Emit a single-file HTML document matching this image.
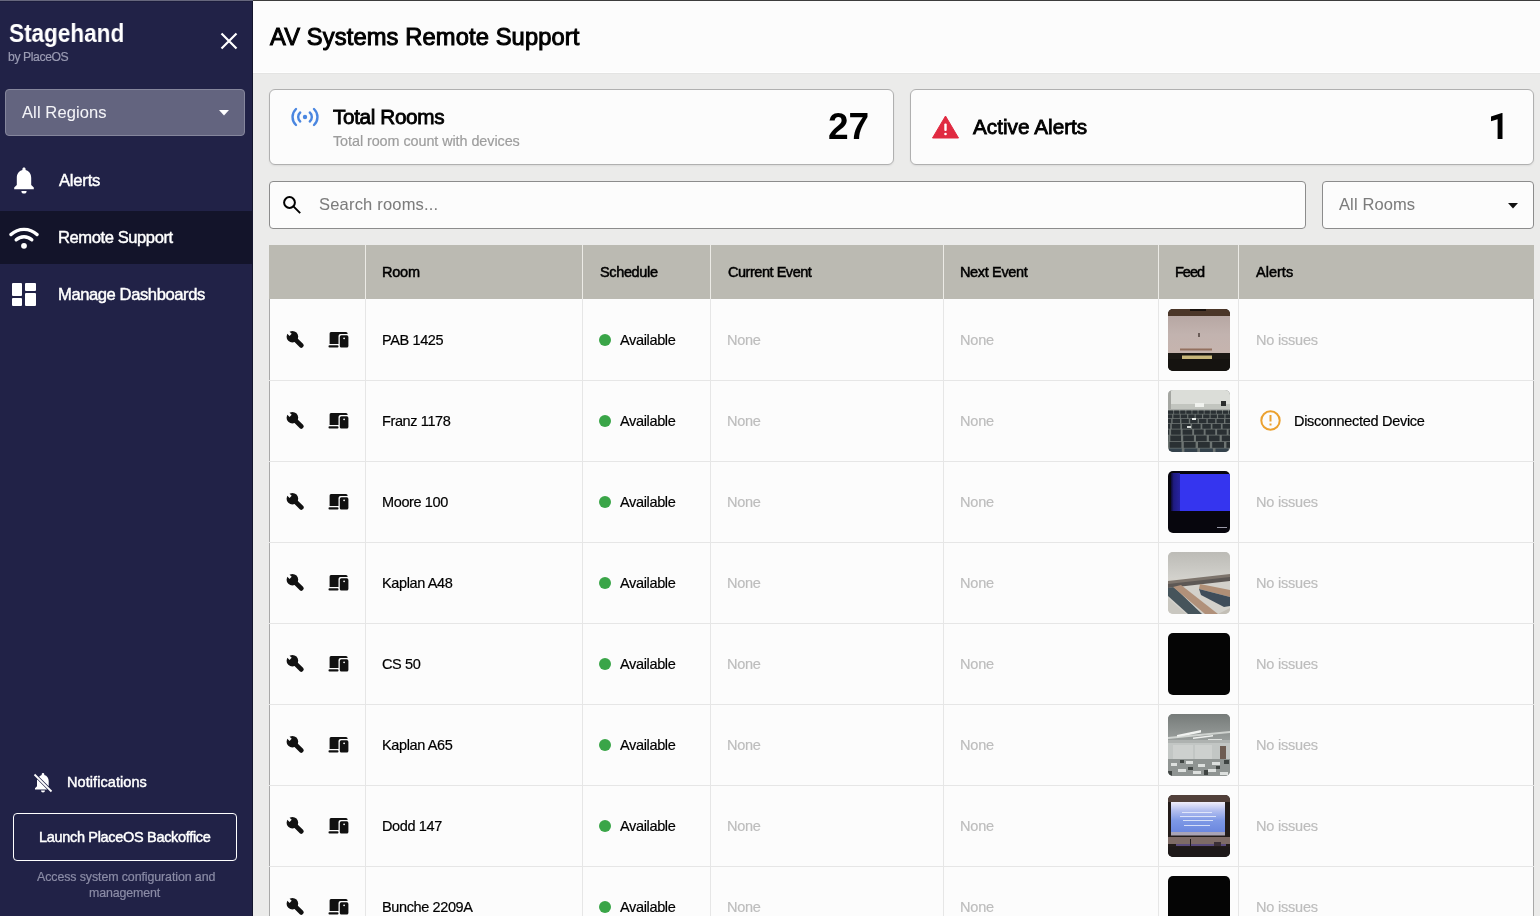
<!DOCTYPE html>
<html><head><meta charset="utf-8"><title>AV Systems Remote Support</title>
<style>
html,body{margin:0;padding:0;width:1540px;height:916px;overflow:hidden;position:relative}
body{font-family:"Liberation Sans",sans-serif}
.t{position:absolute;white-space:nowrap;will-change:transform}
.b{position:absolute}

</style></head><body>
<div class="b" style="left:0px;top:0px;width:1540px;height:916px;background:#ebebea"></div>
<div class="b" style="left:253px;top:0px;width:1287px;height:73px;background:#fcfcfc"></div>
<div class="b" style="left:253px;top:72px;width:1287px;height:1px;background:#ffffff"></div>
<div class="b" style="left:253px;top:73px;width:1287px;height:1px;background:#e4e4e3"></div>
<div class="b" style="left:0px;top:0px;width:253px;height:916px;background:#212247"></div>
<div class="b" style="left:252px;top:0px;width:1px;height:916px;background:#15162e"></div>
<div class="b" style="left:0px;top:0px;width:253px;height:1px;background:#66677d"></div>
<div class="b" style="left:253px;top:0px;width:1287px;height:1px;background:#3d3d3d"></div>
<div class="b" style="left:0px;top:1px;width:252px;height:1px;background:#1c1d3c"></div>
<div class="t" style="left:9.0px;top:17.50px;font-size:26.1px;line-height:31.32px;color:#fff;font-weight:bold;letter-spacing:0px;transform:scaleX(0.864);transform-origin:0 50%;">Stagehand</div>
<div class="t" style="left:8.3px;top:50.25px;font-size:12.2px;line-height:14.64px;color:#9a9bb3;font-weight:normal;letter-spacing:-0.4px;-webkit-text-stroke:0.2px #9a9bb3;">by PlaceOS</div>
<svg class="b" style="left:219px;top:31px" width="20" height="20" viewBox="0 0 20 20"><path d="M2.5 2.5 L17.5 17.5 M17.5 2.5 L2.5 17.5" stroke="#fff" stroke-width="2.2" stroke-linecap="butt"/></svg>
<div class="b" style="left:5px;top:89px;width:240px;height:47px;background:#63647f;border:1px solid #85869c;border-radius:4px;box-sizing:border-box"></div>
<div class="t" style="left:21.5px;top:103.08px;font-size:16.5px;line-height:19.8px;color:#f4f4f8;font-weight:normal;letter-spacing:0.11px;-webkit-text-stroke:0.05px #f4f4f8;">All Regions</div>
<svg class="b" style="left:219px;top:110px" width="10" height="6" viewBox="0 0 10 6"><path d="M0 0 H10 L5 5.5 Z" fill="#fff"/></svg>
<div class="b" style="left:0px;top:211px;width:252px;height:53px;background:#13142a"></div>
<svg class="b" style="left:12px;top:166px" width="24" height="28" viewBox="0 0 24 28"><path d="M12 1.5 c1 0 1.6 .7 1.6 1.6 v.9 c3.6 1 5.6 4 5.6 7.8 v7.2 l2.6 2.6 v1.6 H2.2 v-1.6 l2.6-2.6 v-7.2 c0-3.8 2-6.8 5.6-7.8 v-.9 c0-.9 .6-1.6 1.6-1.6z M9.4 25 h5.2 a2.6 2.6 0 0 1 -5.2 0z" fill="#fff"/></svg>
<div class="t" style="left:59.1px;top:170.69px;font-size:16.6px;line-height:19.92px;color:#fff;font-weight:normal;letter-spacing:-0.22px;-webkit-text-stroke:0.45px #fff;">Alerts</div>
<svg class="b" style="left:9px;top:226px" width="30" height="24" viewBox="0 0 30 24"><path d="M2 8.5 A19 19 0 0 1 28 8.5" stroke="#fff" stroke-width="3.4" fill="none" stroke-linecap="round"/><path d="M7.2 13.8 A11.5 11.5 0 0 1 22.8 13.8" stroke="#fff" stroke-width="3.4" fill="none" stroke-linecap="round"/><circle cx="15" cy="19.8" r="2.9" fill="#fff"/></svg>
<div class="t" style="left:58.1px;top:227.69px;font-size:16.6px;line-height:19.92px;color:#fff;font-weight:normal;letter-spacing:-0.438px;-webkit-text-stroke:0.45px #fff;">Remote Support</div>
<svg class="b" style="left:12px;top:283px" width="24" height="24" viewBox="0 0 24 24"><rect x="0" y="0" width="10" height="13" rx="1" fill="#fff"/><rect x="13" y="0" width="11" height="8" rx="1" fill="#fff"/><rect x="0" y="15" width="10" height="8" rx="1" fill="#fff"/><rect x="13" y="10" width="11" height="13" rx="1" fill="#fff"/></svg>
<div class="t" style="left:58.1px;top:285.39px;font-size:16.6px;line-height:19.92px;color:#fff;font-weight:normal;letter-spacing:-0.424px;-webkit-text-stroke:0.45px #fff;">Manage Dashboards</div>
<svg class="b" style="left:33px;top:772px" width="20" height="21" viewBox="0 0 20 21"><path d="M10 1 c.8 0 1.3 .6 1.3 1.3 v.6 c2.8 .7 4.4 3.1 4.4 6 v5.4 l-9.6-9.6 c.7-.9 1.7-1.5 2.6-1.8 v-.6 c0-.7 .5-1.3 1.3-1.3z M4.3 7.5 l9.9 9.9 H2 v-1.2 l2-2 v-5.4 c0-.5 .1-.9 .3-1.3z M8 18.5 h4 a2 2 0 0 1 -4 0z" fill="#fff"/><path d="M1.5 2.5 L18.5 19.5" stroke="#fff" stroke-width="1.8"/></svg>
<div class="t" style="left:67.1px;top:774.38px;font-size:14.5px;line-height:17.4px;color:#fff;font-weight:normal;letter-spacing:0.067px;-webkit-text-stroke:0.45px #fff;">Notifications</div>
<div class="b" style="left:13px;top:813px;width:224px;height:48px;border:1.5px solid #fff;border-radius:4px;box-sizing:border-box"></div>
<div class="t" style="left:39.1px;top:829.28px;font-size:14.5px;line-height:17.4px;color:#fff;font-weight:normal;letter-spacing:-0.321px;-webkit-text-stroke:0.45px #fff;">Launch PlaceOS Backoffice</div>
<div class="t" style="left:36.5px;top:870.06px;font-size:12.4px;line-height:14.88px;color:#8b8ca6;font-weight:normal;letter-spacing:-0.093px;-webkit-text-stroke:0.2px #8b8ca6;">Access system configuration and</div>
<div class="t" style="left:89.3px;top:886.06px;font-size:12.4px;line-height:14.88px;color:#8b8ca6;font-weight:normal;letter-spacing:-0.123px;-webkit-text-stroke:0.2px #8b8ca6;">management</div>
<div class="t" style="left:269.9px;top:23.07px;font-size:23.7px;line-height:28.44px;color:#000;font-weight:normal;letter-spacing:0.129px;-webkit-text-stroke:1.0px #000;">AV Systems Remote Support</div>
<div class="b" style="left:269px;top:89px;width:625px;height:76px;background:#fcfcfc;border:1px solid #b0b0b0;border-radius:6px;box-sizing:border-box;box-shadow:0 1px 2px rgba(0,0,0,.07)"></div>
<div class="b" style="left:910px;top:89px;width:624px;height:76px;background:#fcfcfc;border:1px solid #b0b0b0;border-radius:6px;box-sizing:border-box;box-shadow:0 1px 2px rgba(0,0,0,.07)"></div>
<svg class="b" style="left:290px;top:106px" width="30" height="22" viewBox="0 0 30 22"><path d="M6 3 A11 11 0 0 0 6 19" stroke="#4a86e0" stroke-width="2.4" fill="none" stroke-linecap="round"/><path d="M10.2 6.5 A6 6 0 0 0 10.2 15.5" stroke="#4a86e0" stroke-width="2.4" fill="none" stroke-linecap="round"/><path d="M24 3 A11 11 0 0 1 24 19" stroke="#4a86e0" stroke-width="2.4" fill="none" stroke-linecap="round"/><path d="M19.8 6.5 A6 6 0 0 1 19.8 15.5" stroke="#4a86e0" stroke-width="2.4" fill="none" stroke-linecap="round"/><circle cx="15" cy="11" r="2.2" fill="#4a86e0"/></svg>
<div class="t" style="left:332.9px;top:105.41px;font-size:20.7px;line-height:24.84px;color:#000;font-weight:normal;letter-spacing:-0.35px;-webkit-text-stroke:0.85px #000;">Total Rooms</div>
<div class="t" style="left:332.5px;top:133.17px;font-size:14.4px;line-height:17.28px;color:#9d9d9d;font-weight:normal;letter-spacing:-0.071px;-webkit-text-stroke:0.2px #9d9d9d;">Total room count with devices</div>
<div class="t" style="left:827.7px;top:103.88px;font-size:37.1px;line-height:44.52px;color:#000;font-weight:bold;letter-spacing:0.0px;">27</div>
<svg class="b" style="left:932px;top:115px" width="27" height="24" viewBox="0 0 27 24"><path d="M13.5 1 L26.5 23 H0.5 Z" fill="#e02a41" stroke="#e02a41" stroke-width="1" stroke-linejoin="round"/><rect x="12.3" y="8.5" width="2.4" height="7.5" rx="1" fill="#fff"/><circle cx="13.5" cy="19" r="1.3" fill="#fff"/></svg>
<div class="t" style="left:972.7px;top:115.11px;font-size:20.7px;line-height:24.84px;color:#000;font-weight:normal;letter-spacing:0.033px;-webkit-text-stroke:0.85px #000;">Active Alerts</div>
<svg class="b" style="left:1488px;top:110px" width="18" height="32" viewBox="0 0 18 32"><polygon points="14.5,3 14.5,29 9.6,29 9.6,9.2 3,11.2 3,6.4 13.8,3" fill="#000"/></svg>
<div class="b" style="left:269px;top:181px;width:1037px;height:48px;background:#fcfcfc;border:1px solid #8c8c8c;border-radius:4px;box-sizing:border-box"></div>
<svg class="b" style="left:282px;top:195px" width="20" height="20" viewBox="0 0 20 20"><circle cx="7.5" cy="7.5" r="5.4" stroke="#000" stroke-width="2" fill="none"/><path d="M11.2 11.2 L18.2 18.2" stroke="#000" stroke-width="1.9"/></svg>
<div class="t" style="left:318.5px;top:195.38px;font-size:16.5px;line-height:19.8px;color:#7c7c7c;font-weight:normal;letter-spacing:0.193px;-webkit-text-stroke:0.05px #7c7c7c;">Search rooms...</div>
<div class="b" style="left:1322px;top:181px;width:212px;height:48px;background:#fcfcfc;border:1px solid #8c8c8c;border-radius:4px;box-sizing:border-box"></div>
<div class="t" style="left:1338.9px;top:195.28px;font-size:16.5px;line-height:19.8px;color:#7c7c7c;font-weight:normal;letter-spacing:0.114px;-webkit-text-stroke:0.05px #7c7c7c;">All Rooms</div>
<svg class="b" style="left:1508px;top:203px" width="10" height="6" viewBox="0 0 10 6"><path d="M0 0 H10 L5 5.5 Z" fill="#111"/></svg>
<div class="b" style="left:269px;top:245px;width:1265px;height:671px;background:#fcfcfc;border-left:1px solid #a8a8a8;border-right:1px solid #a8a8a8;box-sizing:border-box"></div>
<div class="b" style="left:269px;top:245px;width:1265px;height:54px;background:#bbbab2"></div>
<div class="b" style="left:365px;top:245px;width:1px;height:54px;background:#ecebe6"></div>
<div class="b" style="left:365px;top:299px;width:1px;height:617px;background:#e6e6e6"></div>
<div class="b" style="left:582px;top:245px;width:1px;height:54px;background:#ecebe6"></div>
<div class="b" style="left:582px;top:299px;width:1px;height:617px;background:#e6e6e6"></div>
<div class="b" style="left:710px;top:245px;width:1px;height:54px;background:#ecebe6"></div>
<div class="b" style="left:710px;top:299px;width:1px;height:617px;background:#e6e6e6"></div>
<div class="b" style="left:943px;top:245px;width:1px;height:54px;background:#ecebe6"></div>
<div class="b" style="left:943px;top:299px;width:1px;height:617px;background:#e6e6e6"></div>
<div class="b" style="left:1158px;top:245px;width:1px;height:54px;background:#ecebe6"></div>
<div class="b" style="left:1158px;top:299px;width:1px;height:617px;background:#e6e6e6"></div>
<div class="b" style="left:1238px;top:245px;width:1px;height:54px;background:#ecebe6"></div>
<div class="b" style="left:1238px;top:299px;width:1px;height:617px;background:#e6e6e6"></div>
<div class="t" style="left:381.7px;top:264.28px;font-size:14.5px;line-height:17.4px;color:#000;font-weight:normal;letter-spacing:-0.233px;-webkit-text-stroke:0.5px #000;">Room</div>
<div class="t" style="left:599.9px;top:264.28px;font-size:14.5px;line-height:17.4px;color:#000;font-weight:normal;letter-spacing:-0.357px;-webkit-text-stroke:0.5px #000;">Schedule</div>
<div class="t" style="left:727.9px;top:264.28px;font-size:14.5px;line-height:17.4px;color:#000;font-weight:normal;letter-spacing:-0.467px;-webkit-text-stroke:0.5px #000;">Current Event</div>
<div class="t" style="left:960.1px;top:264.28px;font-size:14.5px;line-height:17.4px;color:#000;font-weight:normal;letter-spacing:-0.355px;-webkit-text-stroke:0.5px #000;">Next Event</div>
<div class="t" style="left:1175.3px;top:264.28px;font-size:14.5px;line-height:17.4px;color:#000;font-weight:normal;letter-spacing:-1.0px;-webkit-text-stroke:0.5px #000;">Feed</div>
<div class="t" style="left:1255.7px;top:264.28px;font-size:14.5px;line-height:17.4px;color:#000;font-weight:normal;letter-spacing:0.02px;-webkit-text-stroke:0.5px #000;">Alerts</div>
<svg class="b" style="left:286px;top:330px" width="21" height="21" viewBox="0 0 21 21"><defs><mask id="wm0" maskUnits="userSpaceOnUse" x="0" y="0" width="21" height="21"><rect width="21" height="21" fill="#fff"/><rect x="-1.5" y="-3" width="3" height="6" fill="#000" transform="translate(2.5 2.8) rotate(-45)"/></mask></defs><g mask="url(#wm0)" fill="#111"><circle cx="6.4" cy="6.7" r="5.8"/><path d="M6.4 6.7 L15.4 15.5" stroke="#111" stroke-width="4.6" stroke-linecap="round"/></g></svg>
<svg class="b" style="left:328px;top:331px" width="22" height="18" viewBox="0 0 22 18"><path d="M3 1 H18 a1.6 1.6 0 0 1 1.6 1.6 V3 H12.5 a2 2 0 0 0 -2 2 V13 H1.6 V2.6 A1.6 1.6 0 0 1 3 1 Z" fill="#111"/><rect x="0.5" y="14.3" width="10" height="2.2" rx="1" fill="#111"/><rect x="11.8" y="4.3" width="8.6" height="12.3" rx="1.6" fill="#111"/><circle cx="16.1" cy="7.3" r="0.9" fill="#fff"/></svg>
<div class="t" style="left:381.5px;top:332.28px;font-size:14.5px;line-height:17.4px;color:#000;font-weight:normal;letter-spacing:-0.38px;-webkit-text-stroke:0.2px #000;">PAB 1425</div>
<div class="b" style="left:599px;top:334px;width:12px;height:12px;border-radius:50%;background:#3aa548"></div>
<div class="t" style="left:620.1px;top:332.28px;font-size:14.5px;line-height:17.4px;color:#000;font-weight:normal;letter-spacing:-0.35px;-webkit-text-stroke:0.2px #000;">Available</div>
<div class="t" style="left:726.9px;top:332.28px;font-size:14.5px;line-height:17.4px;color:#bdbdbd;font-weight:normal;letter-spacing:-0.267px;-webkit-text-stroke:0.2px #bdbdbd;">None</div>
<div class="t" style="left:959.5px;top:332.28px;font-size:14.5px;line-height:17.4px;color:#bdbdbd;font-weight:normal;letter-spacing:-0.167px;-webkit-text-stroke:0.2px #bdbdbd;">None</div>
<div class="b feed" style="left:1168px;top:309px;width:62px;height:62px;border-radius:5px;overflow:hidden"><svg width="62" height="62" viewBox="0 0 62 62" style="display:block">
<rect width="62" height="62" fill="#1b1814"/>
<linearGradient id="g0a" x1="0" y1="0" x2="0" y2="1"><stop offset="0" stop-color="#b7a7a3"/><stop offset="0.5" stop-color="#c2b3af"/><stop offset="1" stop-color="#c6b4ae"/></linearGradient>
<rect y="0" width="62" height="7" fill="#4b3628"/>
<rect y="0" x="22" width="16" height="2" fill="#1a120d"/>
<rect y="7" width="62" height="37" fill="url(#g0a)"/>
<rect x="30" y="24" width="2" height="4" fill="#6a5c58"/>
<rect x="12" y="39.5" width="32" height="2" fill="#93705f"/>
<rect x="14" y="46.5" width="30" height="3.5" fill="#c8b77a"/>
<rect x="0" y="50" width="62" height="12" fill="#151310"/>
</svg></div>
<div class="t" style="left:1255.9px;top:332.28px;font-size:14.5px;line-height:17.4px;color:#bdbdbd;font-weight:normal;letter-spacing:-0.2px;-webkit-text-stroke:0.2px #bdbdbd;">No issues</div>
<div class="b" style="left:269px;top:380px;width:1265px;height:1px;background:#e6e6e6"></div>
<svg class="b" style="left:286px;top:411px" width="21" height="21" viewBox="0 0 21 21"><defs><mask id="wm1" maskUnits="userSpaceOnUse" x="0" y="0" width="21" height="21"><rect width="21" height="21" fill="#fff"/><rect x="-1.5" y="-3" width="3" height="6" fill="#000" transform="translate(2.5 2.8) rotate(-45)"/></mask></defs><g mask="url(#wm1)" fill="#111"><circle cx="6.4" cy="6.7" r="5.8"/><path d="M6.4 6.7 L15.4 15.5" stroke="#111" stroke-width="4.6" stroke-linecap="round"/></g></svg>
<svg class="b" style="left:328px;top:412px" width="22" height="18" viewBox="0 0 22 18"><path d="M3 1 H18 a1.6 1.6 0 0 1 1.6 1.6 V3 H12.5 a2 2 0 0 0 -2 2 V13 H1.6 V2.6 A1.6 1.6 0 0 1 3 1 Z" fill="#111"/><rect x="0.5" y="14.3" width="10" height="2.2" rx="1" fill="#111"/><rect x="11.8" y="4.3" width="8.6" height="12.3" rx="1.6" fill="#111"/><circle cx="16.1" cy="7.3" r="0.9" fill="#fff"/></svg>
<div class="t" style="left:381.5px;top:413.28px;font-size:14.5px;line-height:17.4px;color:#000;font-weight:normal;letter-spacing:-0.38px;-webkit-text-stroke:0.2px #000;">Franz 1178</div>
<div class="b" style="left:599px;top:415px;width:12px;height:12px;border-radius:50%;background:#3aa548"></div>
<div class="t" style="left:620.1px;top:413.28px;font-size:14.5px;line-height:17.4px;color:#000;font-weight:normal;letter-spacing:-0.35px;-webkit-text-stroke:0.2px #000;">Available</div>
<div class="t" style="left:726.9px;top:413.28px;font-size:14.5px;line-height:17.4px;color:#bdbdbd;font-weight:normal;letter-spacing:-0.267px;-webkit-text-stroke:0.2px #bdbdbd;">None</div>
<div class="t" style="left:959.5px;top:413.28px;font-size:14.5px;line-height:17.4px;color:#bdbdbd;font-weight:normal;letter-spacing:-0.167px;-webkit-text-stroke:0.2px #bdbdbd;">None</div>
<div class="b feed" style="left:1168px;top:390px;width:62px;height:62px;border-radius:5px;overflow:hidden"><svg width="62" height="62" viewBox="0 0 62 62" style="display:block">
<rect width="62" height="62" fill="#6d7472"/>
<rect width="62" height="16" fill="#dbddd8"/>
<rect y="14" width="62" height="6" fill="#c2c5bf"/>
<rect x="27" y="13" width="9" height="4" fill="#f0f2ee"/>
<rect x="53" y="11" width="5" height="5" fill="#2c2e2e"/>
<rect x="0" y="1" width="3" height="18" fill="#a4a6a1"/>
<rect y="19.5" width="62" height="1.5" fill="#8d928f"/>
<rect x="-0.0" y="20.5" width="5.2" height="3.3" fill="#2a3033"/><rect x="6.1" y="20.5" width="5.2" height="3.3" fill="#2a3033"/><rect x="12.2" y="20.5" width="5.2" height="3.3" fill="#2a3033"/><rect x="18.3" y="20.5" width="5.2" height="3.3" fill="#2a3033"/><rect x="24.4" y="20.5" width="5.2" height="3.3" fill="#2a3033"/><rect x="30.5" y="20.5" width="5.2" height="3.3" fill="#2a3033"/><rect x="36.6" y="20.5" width="5.2" height="3.3" fill="#2a3033"/><rect x="42.7" y="20.5" width="5.2" height="3.3" fill="#2a3033"/><rect x="48.8" y="20.5" width="5.2" height="3.3" fill="#2a3033"/><rect x="54.9" y="20.5" width="5.2" height="3.3" fill="#2a3033"/><rect x="61.0" y="20.5" width="5.2" height="3.3" fill="#2a3033"/><rect x="-2.1" y="24.5" width="6.3" height="3.7" fill="#2a3033"/><rect x="5.4" y="24.5" width="6.3" height="3.7" fill="#2a3033"/><rect x="12.8" y="24.5" width="6.3" height="3.7" fill="#2a3033"/><rect x="20.3" y="24.5" width="6.3" height="3.7" fill="#2a3033"/><rect x="27.7" y="24.5" width="6.3" height="3.7" fill="#2a3033"/><rect x="35.2" y="24.5" width="6.3" height="3.7" fill="#2a3033"/><rect x="42.6" y="24.5" width="6.3" height="3.7" fill="#2a3033"/><rect x="50.1" y="24.5" width="6.3" height="3.7" fill="#2a3033"/><rect x="57.5" y="24.5" width="6.3" height="3.7" fill="#2a3033"/><rect x="-4.2" y="29" width="7.4" height="4.2" fill="#2a3033"/><rect x="4.6" y="29" width="7.4" height="4.2" fill="#2a3033"/><rect x="13.4" y="29" width="7.4" height="4.2" fill="#2a3033"/><rect x="22.2" y="29" width="7.4" height="4.2" fill="#2a3033"/><rect x="31.0" y="29" width="7.4" height="4.2" fill="#2a3033"/><rect x="39.8" y="29" width="7.4" height="4.2" fill="#2a3033"/><rect x="48.6" y="29" width="7.4" height="4.2" fill="#2a3033"/><rect x="57.4" y="29" width="7.4" height="4.2" fill="#2a3033"/><rect x="-6.3" y="34" width="8.5" height="4.7" fill="#2a3033"/><rect x="3.8" y="34" width="8.5" height="4.7" fill="#2a3033"/><rect x="14.0" y="34" width="8.5" height="4.7" fill="#2a3033"/><rect x="24.1" y="34" width="8.5" height="4.7" fill="#2a3033"/><rect x="34.3" y="34" width="8.5" height="4.7" fill="#2a3033"/><rect x="44.4" y="34" width="8.5" height="4.7" fill="#2a3033"/><rect x="54.6" y="34" width="8.5" height="4.7" fill="#2a3033"/><rect x="-8.4" y="39.5" width="9.6" height="5.2" fill="#2a3033"/><rect x="3.1" y="39.5" width="9.6" height="5.2" fill="#2a3033"/><rect x="14.6" y="39.5" width="9.6" height="5.2" fill="#2a3033"/><rect x="26.1" y="39.5" width="9.6" height="5.2" fill="#2a3033"/><rect x="37.6" y="39.5" width="9.6" height="5.2" fill="#2a3033"/><rect x="49.1" y="39.5" width="9.6" height="5.2" fill="#2a3033"/><rect x="60.6" y="39.5" width="9.6" height="5.2" fill="#2a3033"/><rect x="-10.5" y="45.5" width="10.7" height="5.7" fill="#2a3033"/><rect x="2.3" y="45.5" width="10.7" height="5.7" fill="#2a3033"/><rect x="15.2" y="45.5" width="10.7" height="5.7" fill="#2a3033"/><rect x="28.0" y="45.5" width="10.7" height="5.7" fill="#2a3033"/><rect x="40.9" y="45.5" width="10.7" height="5.7" fill="#2a3033"/><rect x="53.8" y="45.5" width="10.7" height="5.7" fill="#2a3033"/><rect x="-12.6" y="52" width="11.8" height="5.8" fill="#2a3033"/><rect x="1.6" y="52" width="11.8" height="5.8" fill="#2a3033"/><rect x="15.8" y="52" width="11.8" height="5.8" fill="#2a3033"/><rect x="30.0" y="52" width="11.8" height="5.8" fill="#2a3033"/><rect x="44.2" y="52" width="11.8" height="5.8" fill="#2a3033"/><rect x="58.4" y="52" width="11.8" height="5.8" fill="#2a3033"/><rect x="-14.7" y="58.5" width="12.9" height="3.5" fill="#34424c"/><rect x="0.9" y="58.5" width="12.9" height="3.5" fill="#34424c"/><rect x="16.4" y="58.5" width="12.9" height="3.5" fill="#34424c"/><rect x="32.0" y="58.5" width="12.9" height="3.5" fill="#34424c"/><rect x="47.5" y="58.5" width="12.9" height="3.5" fill="#34424c"/>
<rect x="24" y="28" width="4" height="2" fill="#e8ebe8"/>
<rect x="19" y="36" width="4" height="2" fill="#d8dbd8"/>
</svg></div>
<svg class="b" style="left:1259px;top:409px" width="23" height="23" viewBox="0 0 23 23"><circle cx="11.5" cy="11.5" r="9.2" stroke="#eba12f" stroke-width="2" fill="none"/><rect x="10.5" y="6" width="2" height="6.5" fill="#eba12f"/><rect x="10.5" y="14.5" width="2" height="2" fill="#eba12f"/></svg>
<div class="t" style="left:1293.5px;top:412.58px;font-size:14.5px;line-height:17.4px;color:#000;font-weight:normal;letter-spacing:-0.299px;-webkit-text-stroke:0.2px #000;">Disconnected Device</div>
<div class="b" style="left:269px;top:461px;width:1265px;height:1px;background:#e6e6e6"></div>
<svg class="b" style="left:286px;top:492px" width="21" height="21" viewBox="0 0 21 21"><defs><mask id="wm2" maskUnits="userSpaceOnUse" x="0" y="0" width="21" height="21"><rect width="21" height="21" fill="#fff"/><rect x="-1.5" y="-3" width="3" height="6" fill="#000" transform="translate(2.5 2.8) rotate(-45)"/></mask></defs><g mask="url(#wm2)" fill="#111"><circle cx="6.4" cy="6.7" r="5.8"/><path d="M6.4 6.7 L15.4 15.5" stroke="#111" stroke-width="4.6" stroke-linecap="round"/></g></svg>
<svg class="b" style="left:328px;top:493px" width="22" height="18" viewBox="0 0 22 18"><path d="M3 1 H18 a1.6 1.6 0 0 1 1.6 1.6 V3 H12.5 a2 2 0 0 0 -2 2 V13 H1.6 V2.6 A1.6 1.6 0 0 1 3 1 Z" fill="#111"/><rect x="0.5" y="14.3" width="10" height="2.2" rx="1" fill="#111"/><rect x="11.8" y="4.3" width="8.6" height="12.3" rx="1.6" fill="#111"/><circle cx="16.1" cy="7.3" r="0.9" fill="#fff"/></svg>
<div class="t" style="left:381.5px;top:494.28px;font-size:14.5px;line-height:17.4px;color:#000;font-weight:normal;letter-spacing:-0.38px;-webkit-text-stroke:0.2px #000;">Moore 100</div>
<div class="b" style="left:599px;top:496px;width:12px;height:12px;border-radius:50%;background:#3aa548"></div>
<div class="t" style="left:620.1px;top:494.28px;font-size:14.5px;line-height:17.4px;color:#000;font-weight:normal;letter-spacing:-0.35px;-webkit-text-stroke:0.2px #000;">Available</div>
<div class="t" style="left:726.9px;top:494.28px;font-size:14.5px;line-height:17.4px;color:#bdbdbd;font-weight:normal;letter-spacing:-0.267px;-webkit-text-stroke:0.2px #bdbdbd;">None</div>
<div class="t" style="left:959.5px;top:494.28px;font-size:14.5px;line-height:17.4px;color:#bdbdbd;font-weight:normal;letter-spacing:-0.167px;-webkit-text-stroke:0.2px #bdbdbd;">None</div>
<div class="b feed" style="left:1168px;top:471px;width:62px;height:62px;border-radius:5px;overflow:hidden"><svg width="62" height="62" viewBox="0 0 62 62" style="display:block">
<rect width="62" height="62" fill="#07060d"/>
<linearGradient id="g2a" x1="0" y1="0" x2="1" y2="0"><stop offset="0" stop-color="#0c0a34"/><stop offset="0.3" stop-color="#1f1b80"/><stop offset="1" stop-color="#2622a0"/></linearGradient>
<rect x="3" y="2" width="9" height="38" fill="url(#g2a)"/>
<rect x="12" y="3" width="50" height="37" fill="#3535ef"/>
<rect x="49" y="56" width="10" height="1" fill="#9a9aa8"/>
</svg></div>
<div class="t" style="left:1255.9px;top:494.28px;font-size:14.5px;line-height:17.4px;color:#bdbdbd;font-weight:normal;letter-spacing:-0.2px;-webkit-text-stroke:0.2px #bdbdbd;">No issues</div>
<div class="b" style="left:269px;top:542px;width:1265px;height:1px;background:#e6e6e6"></div>
<svg class="b" style="left:286px;top:573px" width="21" height="21" viewBox="0 0 21 21"><defs><mask id="wm3" maskUnits="userSpaceOnUse" x="0" y="0" width="21" height="21"><rect width="21" height="21" fill="#fff"/><rect x="-1.5" y="-3" width="3" height="6" fill="#000" transform="translate(2.5 2.8) rotate(-45)"/></mask></defs><g mask="url(#wm3)" fill="#111"><circle cx="6.4" cy="6.7" r="5.8"/><path d="M6.4 6.7 L15.4 15.5" stroke="#111" stroke-width="4.6" stroke-linecap="round"/></g></svg>
<svg class="b" style="left:328px;top:574px" width="22" height="18" viewBox="0 0 22 18"><path d="M3 1 H18 a1.6 1.6 0 0 1 1.6 1.6 V3 H12.5 a2 2 0 0 0 -2 2 V13 H1.6 V2.6 A1.6 1.6 0 0 1 3 1 Z" fill="#111"/><rect x="0.5" y="14.3" width="10" height="2.2" rx="1" fill="#111"/><rect x="11.8" y="4.3" width="8.6" height="12.3" rx="1.6" fill="#111"/><circle cx="16.1" cy="7.3" r="0.9" fill="#fff"/></svg>
<div class="t" style="left:381.5px;top:575.28px;font-size:14.5px;line-height:17.4px;color:#000;font-weight:normal;letter-spacing:-0.38px;-webkit-text-stroke:0.2px #000;">Kaplan A48</div>
<div class="b" style="left:599px;top:577px;width:12px;height:12px;border-radius:50%;background:#3aa548"></div>
<div class="t" style="left:620.1px;top:575.28px;font-size:14.5px;line-height:17.4px;color:#000;font-weight:normal;letter-spacing:-0.35px;-webkit-text-stroke:0.2px #000;">Available</div>
<div class="t" style="left:726.9px;top:575.28px;font-size:14.5px;line-height:17.4px;color:#bdbdbd;font-weight:normal;letter-spacing:-0.267px;-webkit-text-stroke:0.2px #bdbdbd;">None</div>
<div class="t" style="left:959.5px;top:575.28px;font-size:14.5px;line-height:17.4px;color:#bdbdbd;font-weight:normal;letter-spacing:-0.167px;-webkit-text-stroke:0.2px #bdbdbd;">None</div>
<div class="b feed" style="left:1168px;top:552px;width:62px;height:62px;border-radius:5px;overflow:hidden"><svg width="62" height="62" viewBox="0 0 62 62" style="display:block">
<rect width="62" height="62" fill="#d3d1cb"/>
<linearGradient id="g3a" x1="0" y1="0" x2="0" y2="1"><stop offset="0" stop-color="#bcbbb6"/><stop offset="1" stop-color="#d2d1cc"/></linearGradient>
<rect width="62" height="26" fill="url(#g3a)"/>
<polygon points="0,29 62,22 62,27 0,34" fill="#7d746c"/>
<polygon points="0,32 62,25 62,29 0,36" fill="#5d5855"/>
<polygon points="0,36 6,35 34,62 20,62 0,44" fill="#46545b"/>
<polygon points="5,35 13,33 50,62 37,62" fill="#b1917a"/>
<polygon points="32,32 62,38 62,45 31,37" fill="#b08f76"/>
<polygon points="31,37 62,45 62,54 56,55 33,43" fill="#3f4d5a"/>
<polygon points="0,46 18,62 0,62" fill="#c9c7c0"/>
<polygon points="50,62 62,56 62,62" fill="#c3bfb6"/>
</svg></div>
<div class="t" style="left:1255.9px;top:575.28px;font-size:14.5px;line-height:17.4px;color:#bdbdbd;font-weight:normal;letter-spacing:-0.2px;-webkit-text-stroke:0.2px #bdbdbd;">No issues</div>
<div class="b" style="left:269px;top:623px;width:1265px;height:1px;background:#e6e6e6"></div>
<svg class="b" style="left:286px;top:654px" width="21" height="21" viewBox="0 0 21 21"><defs><mask id="wm4" maskUnits="userSpaceOnUse" x="0" y="0" width="21" height="21"><rect width="21" height="21" fill="#fff"/><rect x="-1.5" y="-3" width="3" height="6" fill="#000" transform="translate(2.5 2.8) rotate(-45)"/></mask></defs><g mask="url(#wm4)" fill="#111"><circle cx="6.4" cy="6.7" r="5.8"/><path d="M6.4 6.7 L15.4 15.5" stroke="#111" stroke-width="4.6" stroke-linecap="round"/></g></svg>
<svg class="b" style="left:328px;top:655px" width="22" height="18" viewBox="0 0 22 18"><path d="M3 1 H18 a1.6 1.6 0 0 1 1.6 1.6 V3 H12.5 a2 2 0 0 0 -2 2 V13 H1.6 V2.6 A1.6 1.6 0 0 1 3 1 Z" fill="#111"/><rect x="0.5" y="14.3" width="10" height="2.2" rx="1" fill="#111"/><rect x="11.8" y="4.3" width="8.6" height="12.3" rx="1.6" fill="#111"/><circle cx="16.1" cy="7.3" r="0.9" fill="#fff"/></svg>
<div class="t" style="left:381.5px;top:656.28px;font-size:14.5px;line-height:17.4px;color:#000;font-weight:normal;letter-spacing:-0.38px;-webkit-text-stroke:0.2px #000;">CS 50</div>
<div class="b" style="left:599px;top:658px;width:12px;height:12px;border-radius:50%;background:#3aa548"></div>
<div class="t" style="left:620.1px;top:656.28px;font-size:14.5px;line-height:17.4px;color:#000;font-weight:normal;letter-spacing:-0.35px;-webkit-text-stroke:0.2px #000;">Available</div>
<div class="t" style="left:726.9px;top:656.28px;font-size:14.5px;line-height:17.4px;color:#bdbdbd;font-weight:normal;letter-spacing:-0.267px;-webkit-text-stroke:0.2px #bdbdbd;">None</div>
<div class="t" style="left:959.5px;top:656.28px;font-size:14.5px;line-height:17.4px;color:#bdbdbd;font-weight:normal;letter-spacing:-0.167px;-webkit-text-stroke:0.2px #bdbdbd;">None</div>
<div class="b feed" style="left:1168px;top:633px;width:62px;height:62px;border-radius:5px;overflow:hidden"><svg width="62" height="62" viewBox="0 0 62 62" style="display:block"><rect width="62" height="62" fill="#050505"/></svg></div>
<div class="t" style="left:1255.9px;top:656.28px;font-size:14.5px;line-height:17.4px;color:#bdbdbd;font-weight:normal;letter-spacing:-0.2px;-webkit-text-stroke:0.2px #bdbdbd;">No issues</div>
<div class="b" style="left:269px;top:704px;width:1265px;height:1px;background:#e6e6e6"></div>
<svg class="b" style="left:286px;top:735px" width="21" height="21" viewBox="0 0 21 21"><defs><mask id="wm5" maskUnits="userSpaceOnUse" x="0" y="0" width="21" height="21"><rect width="21" height="21" fill="#fff"/><rect x="-1.5" y="-3" width="3" height="6" fill="#000" transform="translate(2.5 2.8) rotate(-45)"/></mask></defs><g mask="url(#wm5)" fill="#111"><circle cx="6.4" cy="6.7" r="5.8"/><path d="M6.4 6.7 L15.4 15.5" stroke="#111" stroke-width="4.6" stroke-linecap="round"/></g></svg>
<svg class="b" style="left:328px;top:736px" width="22" height="18" viewBox="0 0 22 18"><path d="M3 1 H18 a1.6 1.6 0 0 1 1.6 1.6 V3 H12.5 a2 2 0 0 0 -2 2 V13 H1.6 V2.6 A1.6 1.6 0 0 1 3 1 Z" fill="#111"/><rect x="0.5" y="14.3" width="10" height="2.2" rx="1" fill="#111"/><rect x="11.8" y="4.3" width="8.6" height="12.3" rx="1.6" fill="#111"/><circle cx="16.1" cy="7.3" r="0.9" fill="#fff"/></svg>
<div class="t" style="left:381.5px;top:737.28px;font-size:14.5px;line-height:17.4px;color:#000;font-weight:normal;letter-spacing:-0.38px;-webkit-text-stroke:0.2px #000;">Kaplan A65</div>
<div class="b" style="left:599px;top:739px;width:12px;height:12px;border-radius:50%;background:#3aa548"></div>
<div class="t" style="left:620.1px;top:737.28px;font-size:14.5px;line-height:17.4px;color:#000;font-weight:normal;letter-spacing:-0.35px;-webkit-text-stroke:0.2px #000;">Available</div>
<div class="t" style="left:726.9px;top:737.28px;font-size:14.5px;line-height:17.4px;color:#bdbdbd;font-weight:normal;letter-spacing:-0.267px;-webkit-text-stroke:0.2px #bdbdbd;">None</div>
<div class="t" style="left:959.5px;top:737.28px;font-size:14.5px;line-height:17.4px;color:#bdbdbd;font-weight:normal;letter-spacing:-0.167px;-webkit-text-stroke:0.2px #bdbdbd;">None</div>
<div class="b feed" style="left:1168px;top:714px;width:62px;height:62px;border-radius:5px;overflow:hidden"><svg width="62" height="62" viewBox="0 0 62 62" style="display:block">
<rect width="62" height="62" fill="#888d8b"/>
<linearGradient id="g5a" x1="0" y1="0" x2="0" y2="1"><stop offset="0" stop-color="#767b79"/><stop offset="1" stop-color="#9ca19f"/></linearGradient>
<rect width="62" height="28" fill="url(#g5a)"/>
<polygon points="9,21 33,16 33,18.5 9,23.5" fill="#f2f4f2"/>
<polygon points="0,23 62,17 62,19 0,25" fill="#dfe2df" opacity="0.8"/>
<polygon points="25,23.5 45,21 45,22.5 25,25" fill="#eef0ee"/>
<rect x="40" y="25" width="14" height="1.5" fill="#e0e3e0"/>
<rect x="0" y="26" width="62" height="3" fill="#aeb2b0"/>
<rect x="0" y="29" width="62" height="17" fill="#c2c6c4"/>
<rect x="5" y="31" width="20" height="14" fill="#cdd0ce"/>
<rect x="27" y="31" width="17" height="14" fill="#cdd0ce"/>
<rect x="52" y="32" width="6" height="14" fill="#6e5c52"/>
<rect x="0" y="45" width="62" height="17" fill="#8f9492"/>
<g fill="#dde0de"><rect x="3" y="49" width="6" height="3"/><rect x="18" y="47" width="7" height="3"/><rect x="30" y="50" width="7" height="3"/><rect x="44" y="48" width="8" height="3"/><rect x="10" y="55" width="8" height="3"/><rect x="25" y="57" width="8" height="3"/><rect x="40" y="55" width="8" height="3"/><rect x="52" y="58" width="8" height="3"/></g>
<g fill="#3f4442"><rect x="0" y="57" width="4" height="5"/><rect x="12" y="46" width="4" height="3"/><rect x="20" y="53" width="5" height="3"/><rect x="36" y="56" width="4" height="5"/><rect x="48" y="52" width="4" height="3"/><rect x="56" y="46" width="5" height="4"/></g>
</svg></div>
<div class="t" style="left:1255.9px;top:737.28px;font-size:14.5px;line-height:17.4px;color:#bdbdbd;font-weight:normal;letter-spacing:-0.2px;-webkit-text-stroke:0.2px #bdbdbd;">No issues</div>
<div class="b" style="left:269px;top:785px;width:1265px;height:1px;background:#e6e6e6"></div>
<svg class="b" style="left:286px;top:816px" width="21" height="21" viewBox="0 0 21 21"><defs><mask id="wm6" maskUnits="userSpaceOnUse" x="0" y="0" width="21" height="21"><rect width="21" height="21" fill="#fff"/><rect x="-1.5" y="-3" width="3" height="6" fill="#000" transform="translate(2.5 2.8) rotate(-45)"/></mask></defs><g mask="url(#wm6)" fill="#111"><circle cx="6.4" cy="6.7" r="5.8"/><path d="M6.4 6.7 L15.4 15.5" stroke="#111" stroke-width="4.6" stroke-linecap="round"/></g></svg>
<svg class="b" style="left:328px;top:817px" width="22" height="18" viewBox="0 0 22 18"><path d="M3 1 H18 a1.6 1.6 0 0 1 1.6 1.6 V3 H12.5 a2 2 0 0 0 -2 2 V13 H1.6 V2.6 A1.6 1.6 0 0 1 3 1 Z" fill="#111"/><rect x="0.5" y="14.3" width="10" height="2.2" rx="1" fill="#111"/><rect x="11.8" y="4.3" width="8.6" height="12.3" rx="1.6" fill="#111"/><circle cx="16.1" cy="7.3" r="0.9" fill="#fff"/></svg>
<div class="t" style="left:381.5px;top:818.28px;font-size:14.5px;line-height:17.4px;color:#000;font-weight:normal;letter-spacing:-0.38px;-webkit-text-stroke:0.2px #000;">Dodd 147</div>
<div class="b" style="left:599px;top:820px;width:12px;height:12px;border-radius:50%;background:#3aa548"></div>
<div class="t" style="left:620.1px;top:818.28px;font-size:14.5px;line-height:17.4px;color:#000;font-weight:normal;letter-spacing:-0.35px;-webkit-text-stroke:0.2px #000;">Available</div>
<div class="t" style="left:726.9px;top:818.28px;font-size:14.5px;line-height:17.4px;color:#bdbdbd;font-weight:normal;letter-spacing:-0.267px;-webkit-text-stroke:0.2px #bdbdbd;">None</div>
<div class="t" style="left:959.5px;top:818.28px;font-size:14.5px;line-height:17.4px;color:#bdbdbd;font-weight:normal;letter-spacing:-0.167px;-webkit-text-stroke:0.2px #bdbdbd;">None</div>
<div class="b feed" style="left:1168px;top:795px;width:62px;height:62px;border-radius:5px;overflow:hidden"><svg width="62" height="62" viewBox="0 0 62 62" style="display:block">
<rect width="62" height="62" fill="#221b19"/>
<rect width="62" height="7" fill="#51403a"/>
<linearGradient id="g6a" x1="0" y1="0" x2="0" y2="1"><stop offset="0" stop-color="#f1eefa"/><stop offset="0.25" stop-color="#b8c2f0"/><stop offset="0.6" stop-color="#7d98e6"/><stop offset="1" stop-color="#6a86de"/></linearGradient>
<rect x="3" y="7" width="54" height="31" fill="url(#g6a)"/>
<rect x="3" y="37" width="54" height="3.5" fill="#a9a4b6"/>
<g fill="#eef2fc" opacity="0.8"><rect x="14" y="17" width="30" height="1"/><rect x="12" y="21" width="36" height="1"/><rect x="15" y="25" width="30" height="1"/><rect x="16" y="30" width="26" height="1"/></g>
<rect x="0" y="42" width="62" height="7" fill="#7e6b66"/>
<rect x="8" y="49" width="50" height="2" fill="#5b4c7c"/>
<rect x="22" y="44" width="1" height="8" fill="#1e1a1a"/>
<rect x="46" y="47" width="7" height="4" fill="#3b2f36"/>
<rect x="0" y="52" width="62" height="10" fill="#1d1818"/>
</svg></div>
<div class="t" style="left:1255.9px;top:818.28px;font-size:14.5px;line-height:17.4px;color:#bdbdbd;font-weight:normal;letter-spacing:-0.2px;-webkit-text-stroke:0.2px #bdbdbd;">No issues</div>
<div class="b" style="left:269px;top:866px;width:1265px;height:1px;background:#e6e6e6"></div>
<svg class="b" style="left:286px;top:897px" width="21" height="21" viewBox="0 0 21 21"><defs><mask id="wm7" maskUnits="userSpaceOnUse" x="0" y="0" width="21" height="21"><rect width="21" height="21" fill="#fff"/><rect x="-1.5" y="-3" width="3" height="6" fill="#000" transform="translate(2.5 2.8) rotate(-45)"/></mask></defs><g mask="url(#wm7)" fill="#111"><circle cx="6.4" cy="6.7" r="5.8"/><path d="M6.4 6.7 L15.4 15.5" stroke="#111" stroke-width="4.6" stroke-linecap="round"/></g></svg>
<svg class="b" style="left:328px;top:898px" width="22" height="18" viewBox="0 0 22 18"><path d="M3 1 H18 a1.6 1.6 0 0 1 1.6 1.6 V3 H12.5 a2 2 0 0 0 -2 2 V13 H1.6 V2.6 A1.6 1.6 0 0 1 3 1 Z" fill="#111"/><rect x="0.5" y="14.3" width="10" height="2.2" rx="1" fill="#111"/><rect x="11.8" y="4.3" width="8.6" height="12.3" rx="1.6" fill="#111"/><circle cx="16.1" cy="7.3" r="0.9" fill="#fff"/></svg>
<div class="t" style="left:381.5px;top:899.28px;font-size:14.5px;line-height:17.4px;color:#000;font-weight:normal;letter-spacing:-0.38px;-webkit-text-stroke:0.2px #000;">Bunche 2209A</div>
<div class="b" style="left:599px;top:901px;width:12px;height:12px;border-radius:50%;background:#3aa548"></div>
<div class="t" style="left:620.1px;top:899.28px;font-size:14.5px;line-height:17.4px;color:#000;font-weight:normal;letter-spacing:-0.35px;-webkit-text-stroke:0.2px #000;">Available</div>
<div class="t" style="left:726.9px;top:899.28px;font-size:14.5px;line-height:17.4px;color:#bdbdbd;font-weight:normal;letter-spacing:-0.267px;-webkit-text-stroke:0.2px #bdbdbd;">None</div>
<div class="t" style="left:959.5px;top:899.28px;font-size:14.5px;line-height:17.4px;color:#bdbdbd;font-weight:normal;letter-spacing:-0.167px;-webkit-text-stroke:0.2px #bdbdbd;">None</div>
<div class="b feed" style="left:1168px;top:876px;width:62px;height:62px;border-radius:5px;overflow:hidden"><svg width="62" height="62" viewBox="0 0 62 62" style="display:block"><rect width="62" height="62" fill="#050505"/></svg></div>
<div class="t" style="left:1255.9px;top:899.28px;font-size:14.5px;line-height:17.4px;color:#bdbdbd;font-weight:normal;letter-spacing:-0.2px;-webkit-text-stroke:0.2px #bdbdbd;">No issues</div>

</body></html>
